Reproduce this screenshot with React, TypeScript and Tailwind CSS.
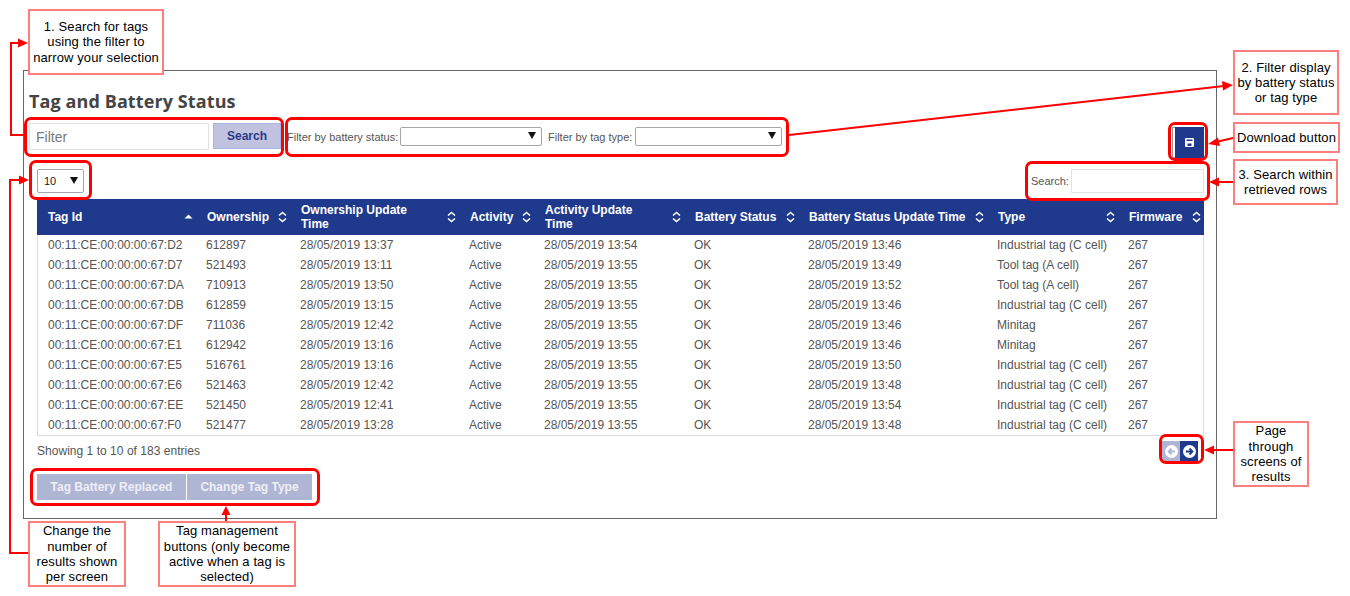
const COLS = [
  { label: 'Tag Id', w: 159, sort: 'asc' },
  { label: 'Ownership', w: 94 },
  { label: 'Ownership Update Time', w: 169 },
  { label: 'Activity', w: 75 },
  { label: 'Activity Update Time', w: 150 },
  { label: 'Battery Status', w: 114 },
  { label: 'Battery Status Update Time', w: 189 },
  { label: 'Type', w: 131 },
  { label: 'Firmware', w: 86 },
]

const IND = 'Industrial tag (C cell)'
const TOOL = 'Tool tag (A cell)'
const ROWS = [
  ['D2', '612897', '13:37', '13:54', '13:46', IND],
  ['D7', '521493', '13:11', '13:55', '13:49', TOOL],
  ['DA', '710913', '13:50', '13:55', '13:52', TOOL],
  ['DB', '612859', '13:15', '13:55', '13:46', IND],
  ['DF', '711036', '12:42', '13:55', '13:46', 'Minitag'],
  ['E1', '612942', '13:16', '13:55', '13:46', 'Minitag'],
  ['E5', '516761', '13:16', '13:55', '13:50', IND],
  ['E6', '521463', '12:42', '13:55', '13:48', IND],
  ['EE', '521450', '12:41', '13:55', '13:54', IND],
  ['F0', '521477', '13:28', '13:55', '13:48', IND],
]

const CALLOUTS = [
  { box: 'left-[28px] top-[9px] w-[136px] h-[66px]', lines: ['1. Search for tags', 'using the filter to', 'narrow your selection'] },
  { box: 'left-[1233px] top-[50px] w-[106px] h-[65px]', lines: ['2. Filter display', 'by battery status', 'or tag type'] },
  { box: 'left-[1233px] top-[122px] w-[107px] h-[31px]', lines: ['Download button'] },
  { box: 'left-[1233px] top-[159px] w-[105px] h-[46px]', lines: ['3. Search within', 'retrieved rows'] },
  { box: 'left-[1233px] top-[421px] w-[76px] h-[66px]', lines: ['Page', 'through', 'screens of', 'results'] },
  { box: 'left-[28px] top-[521px] w-[98px] h-[66px]', lines: ['Change the', 'number of', 'results shown', 'per screen'] },
  { box: 'left-[158px] top-[521px] w-[138px] h-[66px]', lines: ['Tag management', 'buttons (only become', 'active when a tag is', 'selected)'] },
]

const HIGHLIGHTS = [
  'left-[24px] top-[117px] w-[260px] h-[40px]',
  'left-[285px] top-[117px] w-[504px] h-[40px]',
  'left-[29px] top-[160px] w-[63px] h-[40px]',
  'left-[1168px] top-[122px] w-[40px] h-[39px]',
  'left-[1025px] top-[161px] w-[185px] h-[40px]',
  'left-[1159px] top-[434px] w-[45px] h-[30px]',
  'left-[30px] top-[468px] w-[290px] h-[38px]',
]

function SortIcon({ dir }: { dir?: string }) {
  return (
    <svg width="9" height="12" viewBox="0 0 9 12" className="shrink-0">
      {dir === 'asc' ? (
        <path d="M0.5 7.5 L4.5 3.5 L8.5 7.5 Z" fill="#fff" />
      ) : (
        <path d="M1 4.5 L4.5 1.5 L8 4.5 M1 7.5 L4.5 10.5 L8 7.5" fill="none" stroke="#fff" strokeWidth="1.6" />
      )}
    </svg>
  )
}

function Caret() {
  return (
    <svg width="8" height="7" viewBox="0 0 8 7" className="absolute right-[6px] top-[5px] pointer-events-none">
      <path d="M0 0 H8 L4 7 Z" fill="#111" />
    </svg>
  )
}

function Select({ className, value }: { className: string; value?: string }) {
  return (
    <div className={`relative ${className}`}>
      <select
        defaultValue={value}
        className="appearance-none block w-full h-full bg-white border border-[#a6a6a6] rounded-[2px] pl-[6px] text-[11px] text-[#222] outline-none"
      >
        {value ? <option>{value}</option> : <option></option>}
      </select>
      <Caret />
    </div>
  )
}

function Annotations() {
  return (
    <svg width="1350" height="596" className="absolute left-0 top-0 pointer-events-none">
      <g fill="none" stroke="#fe0000" strokeWidth="2">
        <path d="M24 135 H11 V43 H20" />
        <path d="M28 553 H10 V180 H20" />
        <path d="M789 135 L1224 86" />
        <path d="M1233 138 L1216 142" />
        <path d="M1233 182 L1218 182" />
        <path d="M1233 450 L1212 450" />
        <path d="M226 521 V513" />
      </g>
      <g fill="#fe0000">
        <path d="M28 43 L18 38.5 V47.5 Z" />
        <path d="M29 180 L19 175.5 V184.5 Z" />
        <path d="M1233 85 L1222 81 L1223 90.5 Z" />
        <path d="M1208 144 L1218 137.5 L1220 146 Z" />
        <path d="M1209 182 L1219 177.5 V186.5 Z" />
        <path d="M1204 450 L1214 445.5 V454.5 Z" />
        <path d="M226 506 L221.5 515 H230.5 Z" />
      </g>
    </svg>
  )
}

export default function App() {
  return (
    <div className="relative w-[1350px] h-[596px] overflow-hidden bg-white font-['Liberation_Sans',Arial,sans-serif]">
      <div className="pl-[23px] pt-[70px]">
        {/* Main panel */}
        <div className="w-[1194px] h-[449px] border border-[#666] pt-[19px] px-[5px]">
          <h1 className="font-['Open_Sans',sans-serif] font-bold text-[18px] leading-[22px] tracking-[0.1px] text-[#444]">Tag and Battery Status</h1>

          <div className="flex items-start mt-[11px] h-[35px]">
            <input
              placeholder="Filter"
              className="w-[180px] h-[27px] border border-[#e2e2e2] px-[6px] text-[14px] text-[#333] placeholder:text-[#777] outline-none"
            />
            <button className="ml-[4px] w-[68px] h-[26px] bg-[#c0c2df] border border-[#a3b8ea] text-[#2a3a86] font-bold text-xs">Search</button>
            <div className="flex items-center mt-[4px] ml-[6px] h-[19px] text-[11px] text-[#555]">
              <span className="w-[113px] pt-[1px] whitespace-nowrap">Filter by battery status:</span>
              <Select className="w-[142px] h-[19px]" />
              <span className="ml-[6px] w-[87px] pt-[1px] whitespace-nowrap">Filter by tag type:</span>
              <Select className="w-[147px] h-[19px]" />
            </div>
            <div className="ml-auto mt-[4px] mr-[7px] flex">
              <button className="w-[29px] h-[31px] bg-[#1f3a8c] border-l-0 flex items-center justify-center shadow-[-3px_0_0_-1px_#fff,-3px_0_0_0_#999]">
                <svg width="9" height="9" viewBox="0 0 9 9">
                  <path fillRule="evenodd" fill="#fff" d="M1 0 H8 Q9 0 9 1 V8 Q9 9 8 9 H1 Q0 9 0 8 V1 Q0 0 1 0 Z M1.5 1.5 V3 H7.5 V1.5 Z M2.5 5.5 V8 H6.5 V5.5 Z" />
                </svg>
              </button>
            </div>
          </div>

          <div className="flex items-start justify-between ml-[8px] mr-[7px] mt-[11px] h-[30px]">
            <Select className="w-[47px] h-[24px] [&_svg]:top-[8px]" value="10" />
            <div className="flex items-center h-[24px] text-[11px] text-[#555]">
              <span className="w-[40px]">Search:</span>
              <input className="w-[133px] h-[24px] border border-[#e2e2e2] outline-none" />
            </div>
          </div>

          {/* Tag table */}
          <div className="ml-[8px] w-[1167px]">
            <table className="table-fixed w-full border-separate border-spacing-0 text-xs">
              <colgroup>
                {COLS.map((c) => (
                  <col key={c.label} style={{ width: c.w }} />
                ))}
              </colgroup>
              <thead>
                <tr className="h-[36px] bg-[#1f3a8c] text-white">
                  {COLS.map((c) => (
                    <th key={c.label} className="pl-[11px] pr-[3px] text-left font-bold leading-[14px]">
                      <div className="flex items-center justify-between">
                        <span className={c.w === 169 || c.w === 150 ? 'max-w-[112px]' : ''}>{c.label}</span>
                        <SortIcon dir={c.sort} />
                      </div>
                    </th>
                  ))}
                </tr>
              </thead>
              <tbody className="text-[#555] [&_td]:border-[#ddd] [&_td:first-child]:border-l [&_td:last-child]:border-r [&_tr:last-child_td]:border-b">
                {ROWS.map((r, i) => (
                  <tr key={r[0]} className={i === ROWS.length - 1 ? 'h-[21px]' : 'h-[20px]'}>
                    <td className="pl-[10px] truncate">00:11:CE:00:00:00:67:{r[0]}</td>
                    <td className="pl-[10px]">{r[1]}</td>
                    <td className="pl-[10px]">28/05/2019 {r[2]}</td>
                    <td className="pl-[10px]">Active</td>
                    <td className="pl-[10px]">28/05/2019 {r[3]}</td>
                    <td className="pl-[10px]">OK</td>
                    <td className="pl-[10px]">28/05/2019 {r[4]}</td>
                    <td className="pl-[10px] whitespace-nowrap">{r[5]}</td>
                    <td className="pl-[10px]">267</td>
                  </tr>
                ))}
              </tbody>
            </table>
          </div>

          <div className="flex items-start justify-between ml-[8px] mr-[13px] mt-[5px]">
            <span className="text-xs leading-[20px] tracking-[0.03px] text-[#555]">Showing 1 to 10 of 183 entries</span>
            <div className="flex">
              <span className="w-[18px] h-[20px] bg-[#aeb6d4] flex items-center justify-center">
                <svg width="13" height="13" viewBox="0 0 13 13">
                  <circle cx="6.5" cy="6.5" r="6.5" fill="#fff" />
                  <path d="M10 6.5 H4 M6.5 3.5 L3.5 6.5 L6.5 9.5" fill="none" stroke="#aeb6d4" strokeWidth="1.8" />
                </svg>
              </span>
              <span className="w-[18px] h-[20px] bg-[#1f3a8c] flex items-center justify-center">
                <svg width="13" height="13" viewBox="0 0 13 13">
                  <circle cx="6.5" cy="6.5" r="6.5" fill="#fff" />
                  <path d="M3 6.5 H9 M6.5 3.5 L9.5 6.5 L6.5 9.5" fill="none" stroke="#1f3a8c" strokeWidth="1.8" />
                </svg>
              </span>
            </div>
          </div>

          <div className="flex ml-[8px] mt-[13px] gap-px text-xs font-bold text-[#eef0f7]">
            <button className="w-[149px] h-[26px] bg-[#aeb6d4]">Tag Battery Replaced</button>
            <button className="w-[125px] h-[26px] bg-[#aeb6d4]">Change Tag Type</button>
          </div>
        </div>
      </div>

      <Annotations />

      {HIGHLIGHTS.map((h) => (
        <div key={h} className={`absolute ${h} border-[3px] border-[#fe0000] rounded-[7px] pointer-events-none`} />
      ))}

      {CALLOUTS.map((c) => (
        <div
          key={c.lines[0]}
          className={`absolute ${c.box} bg-white border-2 border-[#ff7f7f] flex flex-col justify-center items-center text-[13px] leading-[15.3px] tracking-[0.1px] text-black whitespace-nowrap`}
        >
          {c.lines.map((l) => (
            <span key={l}>{l}</span>
          ))}
        </div>
      ))}
    </div>
  )
}
